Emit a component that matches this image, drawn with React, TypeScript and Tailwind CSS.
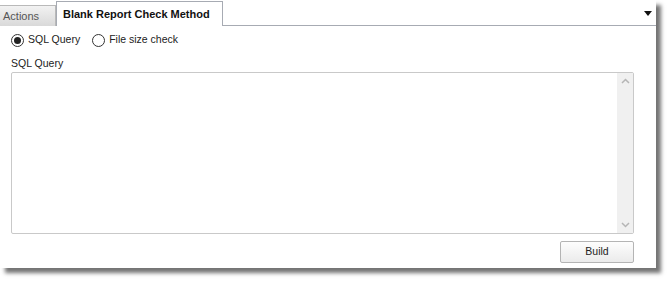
import { FC } from 'react';

const Radio: FC<{ checked?: boolean; label: string }> = ({ checked, label }) => (
  <label className="flex items-center gap-[4px]">
    <span className="flex h-[13px] w-[13px] items-center justify-center rounded-full border border-[#333] bg-white">
      {checked && <span className="h-[7px] w-[7px] rounded-full bg-[#222]" />}
    </span>
    <span>{label}</span>
  </label>
);

const App: FC = () => {
  return (
    <div className="h-[282px] w-[670px] bg-white text-[10.5px] text-[#222]" style={{ fontFamily: '"Liberation Sans", Arial, sans-serif' }}>
      <div className="flex h-[268px] w-[656px] flex-col bg-white shadow-[5px_5px_4px_rgba(0,0,0,0.55)]">
        {/* tab strip */}
        <div className="relative flex h-[26px] items-end border-b border-[#a7abb3]">
          <div className="mb-[-1px] flex h-[21px] w-[56px] items-center border-r border-t border-[#b9b9b9] bg-gradient-to-b from-[#f2f2f2] to-[#d9d9d9] pl-[3px] text-[11px] text-[#555]">
            Actions
          </div>
          <div className="mb-[-1px] flex h-[25px] w-[167px] items-center border border-b-0 border-[#a7abb3] bg-white pl-[6px] text-[11px] font-bold text-[#111]">
            Blank Report Check Method
          </div>
          <svg className="absolute right-[4px] top-[11px]" width="8" height="5" viewBox="0 0 8 5">
            <path d="M0 0h8L4 5z" fill="#111" />
          </svg>
        </div>

        {/* body */}
        <div className="flex flex-1 flex-col px-[11px] pt-[7px]">
          <div className="flex h-[14px] items-center gap-[12px]">
            <Radio checked label="SQL Query" />
            <Radio label="File size check" />
          </div>
          <div className="mt-[9px] h-[14px] leading-[14px]">SQL Query</div>
          <div className="mt-[2px] flex h-[162px] w-[623px] rounded-[2px] border border-[#c9c9c9] bg-white">
            <div className="flex-1" />
            <div className="flex w-[16px] flex-col items-center justify-between bg-[#f0f0f0] py-[5px]">
              <svg width="9" height="6" viewBox="0 0 9 6">
                <path d="M1 5l3.5-3.5L8 5" fill="none" stroke="#b5b5b5" strokeWidth="1.5" />
              </svg>
              <svg width="9" height="6" viewBox="0 0 9 6">
                <path d="M1 1l3.5 3.5L8 1" fill="none" stroke="#b5b5b5" strokeWidth="1.5" />
              </svg>
            </div>
          </div>
          <div className="mt-[7px] flex w-[623px] justify-end">
            <button className="h-[22px] w-[74px] rounded-[2px] border border-[#b4b4b4] bg-gradient-to-b from-[#fdfdfd] to-[#ebebeb] text-[10.5px] text-[#222]">
              Build
            </button>
          </div>
        </div>
      </div>
    </div>
  );
};

export default App;
